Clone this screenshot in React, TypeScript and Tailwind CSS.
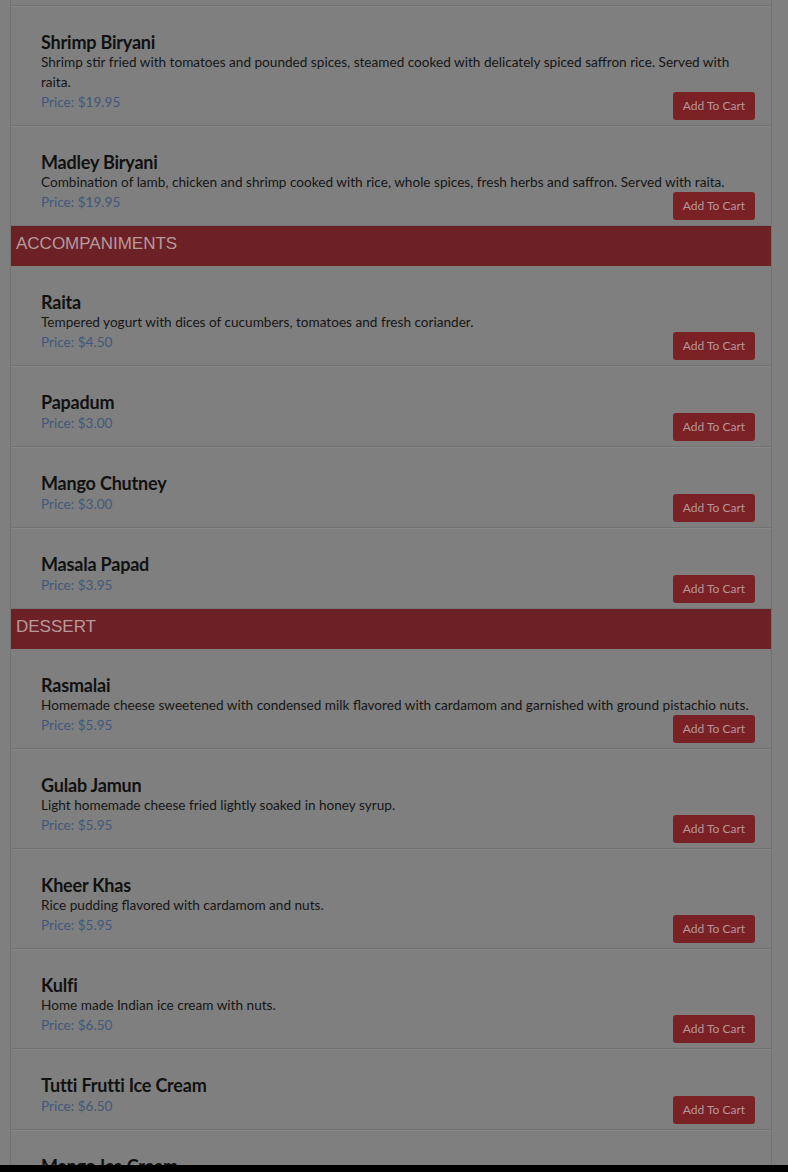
import React from "react";

type Item = { name: string; desc?: string; price: string };
type Section = { title?: string; items: Item[] };

const sections: Section[] = [
  {
    items: [
      {
        name: "Lamb Biryani",
        desc: "Tender pieces of lamb cooked with basmati rice, herbs and spices. Served with raita.",
        price: "$17.95",
      },
      {
        name: "Shrimp Biryani",
        desc: "Shrimp stir fried with tomatoes and pounded spices, steamed cooked with delicately spiced saffron rice. Served with raita.",
        price: "$19.95",
      },
      {
        name: "Madley Biryani",
        desc: "Combination of lamb, chicken and shrimp cooked with rice, whole spices, fresh herbs and saffron. Served with raita.",
        price: "$19.95",
      },
    ],
  },
  {
    title: "ACCOMPANIMENTS",
    items: [
      { name: "Raita", desc: "Tempered yogurt with dices of cucumbers, tomatoes and fresh coriander.", price: "$4.50" },
      { name: "Papadum", price: "$3.00" },
      { name: "Mango Chutney", price: "$3.00" },
      { name: "Masala Papad", price: "$3.95" },
    ],
  },
  {
    title: "DESSERT",
    items: [
      {
        name: "Rasmalai",
        desc: "Homemade cheese sweetened with condensed milk flavored with cardamom and garnished with ground pistachio nuts.",
        price: "$5.95",
      },
      { name: "Gulab Jamun", desc: "Light homemade cheese fried lightly soaked in honey syrup.", price: "$5.95" },
      { name: "Kheer Khas", desc: "Rice pudding flavored with cardamom and nuts.", price: "$5.95" },
      { name: "Kulfi", desc: "Home made Indian ice cream with nuts.", price: "$6.50" },
      { name: "Tutti Frutti Ice Cream", price: "$6.50" },
      { name: "Mango Ice Cream", desc: "Fresh mango ice cream made in house.", price: "$6.50" },
    ],
  },
];

const MenuItem: React.FC<{ item: Item }> = ({ item }) => (
  <div className="border-b border-[#737373] pl-[30px] pr-[16px] pt-[26px] pb-[5px] shadow-[0_1px_0_#878787]">
    <h3 className="text-[18px] leading-[20px] font-bold text-[#111] tracking-[-0.2px]">{item.name}</h3>
    {item.desc && <p className="text-[13.6px] leading-[20px] text-[#161616]">{item.desc}</p>}
    <div className={"flex items-start justify-between " + (item.desc ? "" : "mt-[1px]")}>
      <span className="text-[13.6px] leading-[20px] text-[#42587a]">Price: {item.price}</span>
      <button className="h-[28px] w-[82px] rounded-[3px] bg-[#7a2126] text-[12px] text-[#b5969a]">
        Add To Cart
      </button>
    </div>
  </div>
);

export default function App() {
  return (
    <div className="h-[1172px] overflow-hidden bg-[#7f7f7f] font-['Lato',sans-serif]">
      <div className="-mt-[94px] ml-[10px] w-[762px] border-x border-[#727272]">
        {sections.map((section, i) => (
          <div key={i}>
            {section.title && (
              <div className="h-[40px] bg-[#6c2126] px-[5px] pt-[8px] font-['Liberation_Sans',Arial,sans-serif] text-[17px] leading-[20px] text-[#b79a9c]">
                {section.title}
              </div>
            )}
            {section.items.map((item) => (
              <MenuItem key={item.name} item={item} />
            ))}
          </div>
        ))}
      </div>
      <div className="fixed inset-x-0 bottom-0 h-[7px] bg-black" />
    </div>
  );
}
